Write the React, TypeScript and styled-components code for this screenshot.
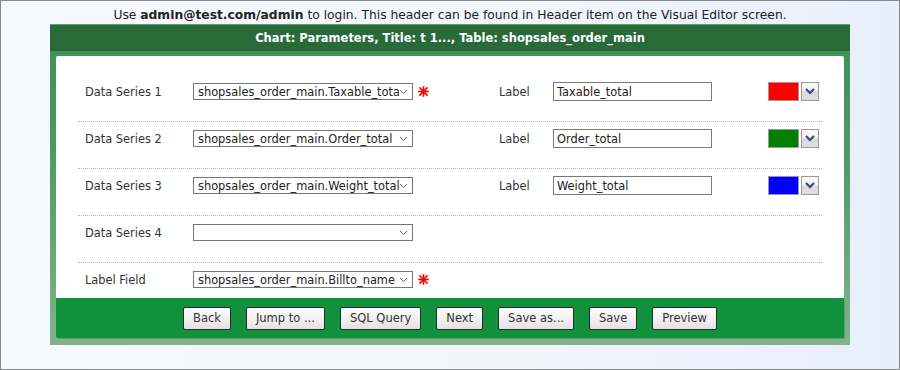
import React from 'react';
import styled, { createGlobalStyle } from 'styled-components';

const GlobalStyle = createGlobalStyle`
  html, body {
    margin: 0;
    padding: 0;
  }
  body {
    font-family: 'DejaVu Sans', Verdana, sans-serif;
    color: #222;
  }
`;

const Page = styled.div`
  box-sizing: border-box;
  width: 900px;
  height: 370px;
  border: 1px solid #8a8a8a;
  background: linear-gradient(90deg, #f6f9fe 0%, #f1f6fd 60%, #e7effa 100%);
  display: flex;
  flex-direction: column;
  align-items: center;
`;

const Note = styled.div`
  font-size: 12.3px;
  line-height: 15px;
  margin-top: 7px;
  height: 16px;
  color: #222;

  b {
    font-weight: bold;
  }
`;

const Panel = styled.div`
  width: 800px;
  background: linear-gradient(180deg, #3f9055 0%, #4e9a62 40%, #83b28d 100%);
  display: flex;
  flex-direction: column;
`;

const PanelHeader = styled.div`
  height: 27px;
  background: #286b38;
  border-top: 1px solid #6c9a78;
  box-sizing: border-box;
  color: #fff;
  font-weight: bold;
  font-size: 11.5px;
  display: flex;
  align-items: center;
  justify-content: center;
`;

const PanelBody = styled.div`
  margin: 5px 6px 7px;
  display: flex;
  flex-direction: column;
`;

const Content = styled.div`
  background: #fff;
  padding: 19px 22px 0;
  border-radius: 2px 2px 0 0;
`;

const Row = styled.div<{ $last?: boolean }>`
  display: grid;
  grid-template-columns: 108px 220px 86px 54px 159px 56px 31px 20px;
  align-items: center;
  height: 19px;
  padding: ${p => (p.$last ? '7px 0 9px' : '7px 0 20px')};
  padding-left: 7px;
  border-bottom: ${p => (p.$last ? 'none' : '1px dotted #b5b5b5')};
  font-size: 11.4px;
  color: #333;
`;

const FieldLabel = styled.span`
  white-space: nowrap;
`;

const Select = styled.div`
  box-sizing: border-box;
  width: 220px;
  height: 17px;
  border: 1px solid #767676;
  background: #fff;
  display: flex;
  align-items: center;
  padding: 0 4px;
  font-size: 11.4px;
  color: #222;
  overflow: hidden;
`;

const SelectText = styled.span`
  flex: 1;
  overflow: hidden;
  white-space: nowrap;
`;

const Required = styled.span`
  display: flex;
  padding-left: 5px;
`;

const TextInput = styled.div`
  box-sizing: border-box;
  width: 159px;
  height: 19px;
  border: 1px solid #7a7a7a;
  display: flex;
  align-items: center;
  padding: 0 3px;
  font-size: 11.4px;
  color: #222;
`;

const Swatch = styled.div<{ $color: string }>`
  box-sizing: border-box;
  width: 31px;
  height: 19px;
  border: 1px solid #9a9a9a;
  background: ${p => p.$color};
`;

const SwatchButton = styled.div`
  box-sizing: border-box;
  width: 18px;
  height: 19px;
  margin-left: 2px;
  border: 1px solid #9a9a9a;
  background: linear-gradient(180deg, #fafafa 0%, #f0f0f0 45%, #d9d9d9 55%, #dedede 100%);
  display: flex;
  align-items: flex-start;
  justify-content: center;
  padding-top: 5px;
`;

const Footer = styled.div`
  height: 40px;
  background: #12913d;
  border-radius: 0 0 2px 2px;
  box-shadow: 1px 1px 0 #5c9a6a;
  display: flex;
  align-items: center;
  justify-content: center;
  gap: 15px;
`;

const Button = styled.button`
  height: 23px;
  padding: 0 9px;
  border: 1px solid #2a2a2a;
  border-radius: 2px;
  background: linear-gradient(180deg, #fdfdfd 0%, #f1f1f1 50%, #e2e2e2 100%);
  font-family: 'DejaVu Sans', Verdana, sans-serif;
  font-size: 11.5px;
  color: #333;
  cursor: pointer;
`;

const Chevron = () => (
  <svg width="9" height="6" viewBox="0 0 9 6">
    <path d="M1 1 L4.5 4.5 L8 1" fill="none" stroke="#666" strokeWidth="1" />
  </svg>
);

const BlueChevron = () => (
  <svg width="10" height="7" viewBox="0 0 10 7">
    <path d="M1 1 L5 5 L9 1" fill="none" stroke="#2c4d86" strokeWidth="2.2" />
  </svg>
);

const Star = () => (
  <svg width="11" height="11" viewBox="0 0 11 11">
    <g stroke="#f00" strokeWidth="1.6" strokeLinecap="square">
      <line x1="5.5" y1="1" x2="5.5" y2="10" />
      <line x1="1" y1="5.5" x2="10" y2="5.5" />
      <line x1="2" y1="2" x2="9" y2="9" />
      <line x1="9" y1="2" x2="2" y2="9" />
    </g>
  </svg>
);

type Series = {
  name: string;
  field: string;
  required?: boolean;
  label?: string;
  color?: string;
};

const rows: Series[] = [
  { name: 'Data Series 1', field: 'shopsales_order_main.Taxable_total', required: true, label: 'Taxable_total', color: '#ff0000' },
  { name: 'Data Series 2', field: 'shopsales_order_main.Order_total', label: 'Order_total', color: '#008000' },
  { name: 'Data Series 3', field: 'shopsales_order_main.Weight_total', label: 'Weight_total', color: '#0000ff' },
  { name: 'Data Series 4', field: '' },
  { name: 'Label Field', field: 'shopsales_order_main.Billto_name', required: true },
];

const buttons = ['Back', 'Jump to ...', 'SQL Query', 'Next', 'Save as...', 'Save', 'Preview'];

export default function App() {
  return (
    <>
      <GlobalStyle />
      <Page>
        <Note>
          Use <b>admin@test.com/admin</b> to login. This header can be found in Header item on the Visual Editor screen.
        </Note>
        <Panel>
          <PanelHeader>Chart: Parameters, Title: t 1..., Table: shopsales_order_main</PanelHeader>
          <PanelBody>
            <Content>
              {rows.map((r, i) => (
                <Row key={r.name} $last={i === rows.length - 1}>
                  <FieldLabel>{r.name}</FieldLabel>
                  <Select>
                    <SelectText>{r.field}</SelectText>
                    <Chevron />
                  </Select>
                  <Required>{r.required && <Star />}</Required>
                  {r.label !== undefined ? (
                    <>
                      <FieldLabel>Label</FieldLabel>
                      <TextInput>{r.label}</TextInput>
                      <span />
                      <Swatch $color={r.color!} />
                      <SwatchButton>
                        <BlueChevron />
                      </SwatchButton>
                    </>
                  ) : null}
                </Row>
              ))}
            </Content>
            <Footer>
              {buttons.map(b => (
                <Button key={b}>{b}</Button>
              ))}
            </Footer>
          </PanelBody>
        </Panel>
      </Page>
    </>
  );
}
